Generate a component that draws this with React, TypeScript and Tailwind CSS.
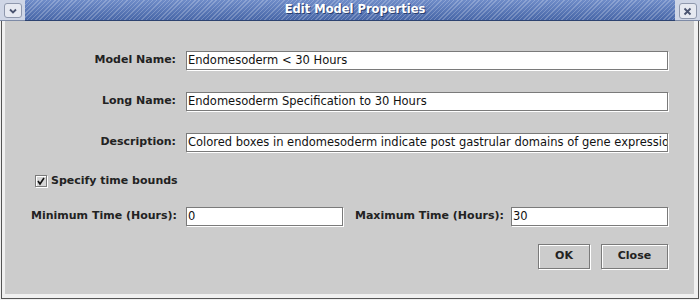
import React from "react";

const font = "font-['DejaVu_Sans',sans-serif]";

function Field({ value, w }: { value: string; w: string }) {
  return (
    <div
      className={`${w} min-w-0 h-[19px] bg-white border border-[#7a7a7a] shadow-[1px_1px_0_#ffffff] flex items-center pl-[1px] overflow-hidden whitespace-nowrap text-[11.5px] text-[#111] ${font}`}
    >
      {value}
    </div>
  );
}

function Label({ children, w }: { children: React.ReactNode; w: string }) {
  return (
    <div className={`${w} shrink-0 text-right text-[11px] font-bold text-[#222] ${font} whitespace-nowrap`}>
      {children}
    </div>
  );
}

function Btn({ children, w }: { children: React.ReactNode; w: string }) {
  return (
    <div
      className={`${w} h-[25px] border border-[#7a7a7a] shadow-[inset_1px_1px_0_#ffffff,1px_1px_0_#ffffff] bg-[#cccccc] flex items-center justify-center text-[11px] font-bold text-[#222] ${font}`}
    >
      {children}
    </div>
  );
}

export default function App() {
  return (
    <div className="w-[700px] h-[300px] flex flex-col bg-[#ececec] overflow-hidden">
      {/* Title bar */}
      <div className="h-[21px] flex shrink-0">
        <div className="w-[25px] h-full bg-[#cfd6e6] border-b border-[#7d8aa6] flex items-start justify-center pt-[3px]">
          <div className="w-[18px] h-[15px] rounded-[3px] border border-[#8f98ad] bg-[#e6e9f1] flex items-center justify-center">
            <svg width="10" height="8" viewBox="0 0 10 8">
              <path d="M2 2.5 L5 5.5 L8 2.5" stroke="#4a5470" strokeWidth="1.8" fill="none" />
            </svg>
          </div>
        </div>
        <div className="flex-1 h-full border-b border-[#2c4270] bg-[repeating-linear-gradient(135deg,rgba(255,255,255,0.22)_0px,rgba(255,255,255,0.22)_1px,transparent_1px,transparent_3px),linear-gradient(to_bottom,#6f8cc8,#4867a8)] flex items-center justify-center pl-[10px]">
          <span className={`text-white text-[11.5px] font-bold ${font} [text-shadow:1px_1px_0_#2a3f70]`}>
            Edit Model Properties
          </span>
        </div>
        <div className="w-[25px] h-full bg-[#cfd6e6] border-b border-[#7d8aa6] flex items-start justify-center pt-[3px]">
          <div className="w-[18px] h-[16px] rounded-[3px] border border-[#8f98ad] bg-[#e6e9f1] flex items-center justify-center">
            <svg width="9" height="9" viewBox="0 0 9 9">
              <path d="M1.5 1.5 L7.5 7.5 M7.5 1.5 L1.5 7.5" stroke="#4a5470" strokeWidth="1.8" fill="none" />
            </svg>
          </div>
        </div>
      </div>

      {/* Frame */}
      <div className="flex-1 flex pl-[1px] pr-[1px] pb-[1px] bg-[#f0f0f0]">
        <div className="flex-1 min-w-0 flex border-l border-[#555555] pl-[3px] pr-[4px] pb-[4px] border-b border-r">
          <div className="flex-1 min-w-0 bg-[#cccccc] flex flex-col pl-[26px] pr-[26px] pt-[30px]">
            <div className="flex items-center gap-[10px]">
              <Label w="w-[145px]">Model Name:</Label>
              <Field w="flex-1" value="Endomesoderm < 30 Hours" />
            </div>
            <div className="flex items-center gap-[10px] mt-[22px]">
              <Label w="w-[145px]">Long Name:</Label>
              <Field w="flex-1" value="Endomesoderm Specification to 30 Hours" />
            </div>
            <div className="flex items-center gap-[10px] mt-[22px]">
              <Label w="w-[145px]">Description:</Label>
              <Field
                w="flex-1"
                value="Colored boxes in endomesoderm indicate post gastrular domains of gene expression"
              />
            </div>
            <div className="flex items-center gap-[4px] mt-[23px] pl-[4px] h-[12px]">
              <div className="w-[12px] h-[12px] border border-[#7a7a7a] shadow-[1px_1px_0_#ffffff,inset_1px_1px_0_#ffffff] bg-[#d6d6d6] flex items-center justify-center">
                <svg width="10" height="10" viewBox="0 0 10 10">
                  <path d="M2 5 L4 8 L8 2" stroke="#111" strokeWidth="1.6" fill="none" />
                </svg>
              </div>
              <span className={`text-[11px] font-bold text-[#222] ${font}`}>Specify time bounds</span>
            </div>
            <div className="flex items-center mt-[20px]">
              <Label w="w-[145px]">Minimum Time (Hours):</Label>
              <div className="w-[10px] shrink-0" />
              <Field w="w-[157px] shrink-0" value="0" />
              <div className="w-[12px] shrink-0" />
              <Label w="w-[146px]">Maximum Time (Hours):</Label>
              <div className="w-[10px] shrink-0" />
              <Field w="flex-1" value="30" />
            </div>
            <div className="flex justify-end gap-[11px] mt-[18px]">
              <Btn w="w-[52px]">OK</Btn>
              <Btn w="w-[67px]">Close</Btn>
            </div>
          </div>
        </div>
      </div>
    </div>
  );
}
